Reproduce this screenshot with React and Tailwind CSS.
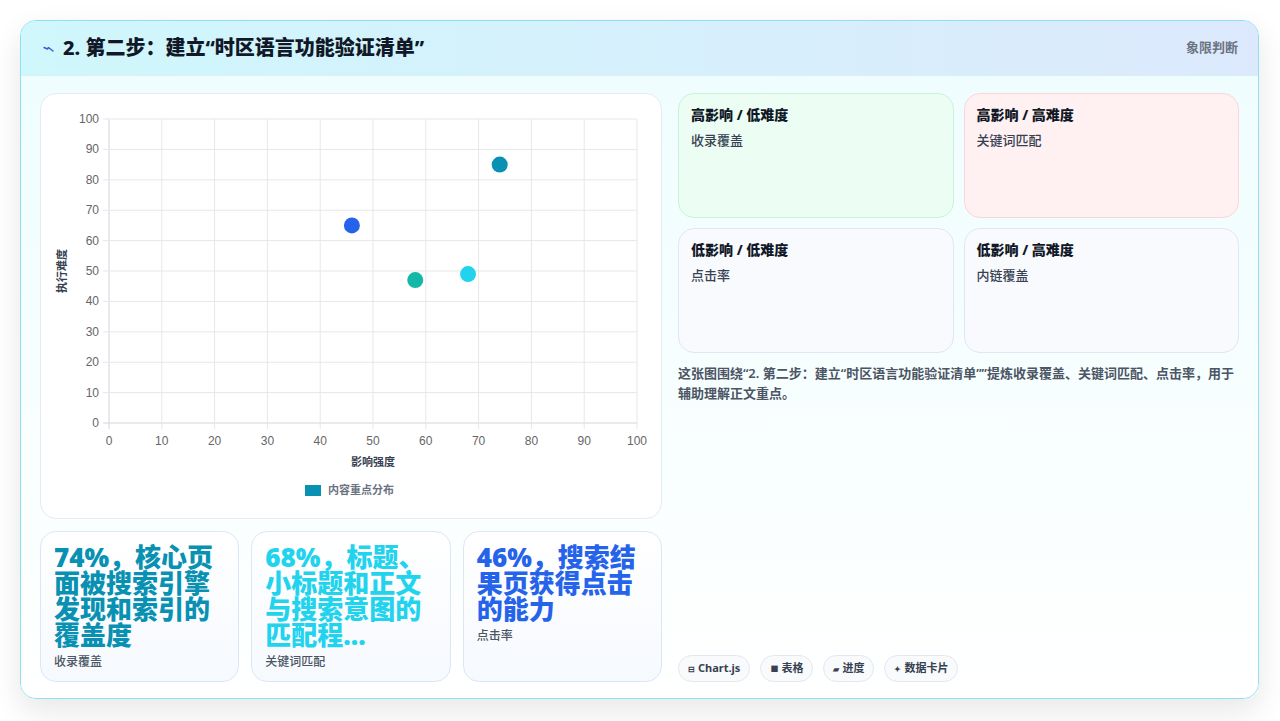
import React from 'react'

const FONT = { fontFamily: '"Noto Sans", "Noto Sans CJK SC", sans-serif' }

const POINTS = [
  { x: 46, y: 65, color: '#2563eb' },
  { x: 74, y: 85, color: '#0891b2' },
  { x: 58, y: 47, color: '#14b8a6' },
  { x: 68, y: 49, color: '#22d3ee' },
]

const QUADRANTS = [
  { title: '高影响 / 低难度', item: '收录覆盖', cls: 'bg-[#ecfdf3] border-[#c8f3d8]' },
  { title: '高影响 / 高难度', item: '关键词匹配', cls: 'bg-[#fff0f1] border-[#fbd5da]' },
  { title: '低影响 / 低难度', item: '点击率', cls: 'bg-[#f8fafd] border-[#dde8f6]' },
  { title: '低影响 / 高难度', item: '内链覆盖', cls: 'bg-[#f8fafd] border-[#dde8f6]' },
]

const STATS = [
  { text: '74%，核心页面被搜索引擎发现和索引的覆盖度', label: '收录覆盖', color: 'text-[#0891b2]' },
  { text: '68%，标题、小标题和正文与搜索意图的匹配程...', label: '关键词匹配', color: 'text-[#22d3ee]' },
  { text: '46%，搜索结果页获得点击的能力', label: '点击率', color: 'text-[#2563eb]' },
]

const CHIPS = [
  { icon: '⊟', label: 'Chart.js' },
  { icon: '■', label: '表格' },
  { icon: '▰', label: '进度' },
  { icon: '✦', label: '数据卡片' },
]

// plot box inside the chart card (card-relative px)
const L = 68, R = 596, T = 25, B = 329
const px = v => L + ((R - L) * v) / 100
const py = v => B - ((B - T) * v) / 100

function Scatter() {
  const ticks = [0, 10, 20, 30, 40, 50, 60, 70, 80, 90, 100]
  const tickFont = { fontFamily: '"Liberation Sans", Arial, sans-serif' }
  return (
    <svg width="620" height="423" viewBox="0 0 620 423" className="block">
      {ticks.map(t => (
        <g key={t}>
          <line x1={px(t)} x2={px(t)} y1={T} y2={B + 6} stroke={t === 0 ? '#d1d5db' : '#e5e7eb'} strokeWidth="1" />
          <line x1={L - 6} x2={R} y1={py(t)} y2={py(t)} stroke={t === 0 ? '#d1d5db' : '#e5e7eb'} strokeWidth="1" />
          <text x={L - 10} y={py(t) + 4} textAnchor="end" fontSize="12" fill="#666" style={tickFont}>{t}</text>
          <text x={px(t)} y={B + 22} textAnchor="middle" fontSize="12" fill="#666" style={tickFont}>{t}</text>
        </g>
      ))}
      {POINTS.map((p, i) => (
        <circle key={i} cx={px(p.x)} cy={py(p.y)} r="8" fill={p.color} />
      ))}
      <text x={332} y={372} textAnchor="middle" fontSize="11" fontWeight="700" fill="#374151" style={FONT}>影响强度</text>
      <text transform={`translate(25 ${(T + B) / 2}) rotate(-90)`} textAnchor="middle" fontSize="11" fontWeight="700" fill="#374151" style={FONT}>执行难度</text>
      <rect x="264" y="391" width="16" height="11" fill="#0891b2" />
      <text x="287" y="400" fontSize="11" fontWeight="700" fill="#6b7280" style={FONT}>内容重点分布</text>
    </svg>
  )
}

export default function App() {
  return (
    <div className="min-h-[721px] bg-white pt-5 px-5 pb-[22px]" style={FONT}>
      <div className="w-[1239px] h-[679px] rounded-2xl border border-[#8fe0ef] overflow-hidden shadow-[0_12px_30px_rgba(15,23,42,0.10)] flex flex-col">
        <div className="h-[55px] shrink-0 flex items-center justify-between pl-[22px] pr-5 bg-linear-to-r from-[#cff7fc] to-[#dce9fc] border-b border-[#d6f0f6]">
          <div className="flex items-center gap-[9px]">
            <svg width="11" height="8" viewBox="0 0 11 8" className="mt-[2px]">
              <path d="M1 2.5 L4.5 4 L5.5 2.5 L10 6" fill="none" stroke="#3b5bdb" strokeWidth="1.4" strokeLinecap="round" strokeLinejoin="round" />
            </svg>
            <h2 className="text-[20px] font-extrabold text-[#111827]">2. 第二步：建立“时区语言功能验证清单”</h2>
          </div>
          <span className="text-[13px] font-semibold text-[#6b7280]">象限判断</span>
        </div>

        <div className="flex-1 bg-linear-to-b from-[#effdfe] to-white px-[19px] pt-[17px] pb-[17px] grid grid-cols-[622px_1fr] gap-4">
          <div className="flex flex-col gap-3">
            <div className="h-[426px] rounded-2xl border border-[#e3ebf3] bg-white">
              <Scatter />
            </div>
            <div className="grid grid-cols-3 gap-3 h-[151px]">
              {STATS.map(s => (
                <div key={s.label} className="rounded-2xl border border-[#dbe7f6] bg-linear-to-b from-white to-[#f6f9fe] px-[13px] pt-[12px]">
                  <div className={`text-[26px] leading-[26px] font-black ${s.color}`}>{s.text}</div>
                  <div className="mt-[5px] text-[12px] font-medium text-[#4b5563]">{s.label}</div>
                </div>
              ))}
            </div>
          </div>

          <div className="flex flex-col">
            <div className="grid grid-cols-2 gap-[10px]">
              {QUADRANTS.map(q => (
                <div key={q.title} className={`h-[125px] rounded-2xl border px-[12px] pt-[11px] ${q.cls}`}>
                  <div className="text-[14px] font-extrabold text-[#111827] leading-[20px]">{q.title}</div>
                  <div className="mt-[5px] text-[13px] font-medium text-[#374151] leading-[20px]">{q.item}</div>
                </div>
              ))}
            </div>
            <p className="mt-[10px] text-[13px] leading-[20px] font-semibold text-[#4b5563]">
              这张图围绕“2. 第二步：建立“时区语言功能验证清单””提炼收录覆盖、关键词匹配、点击率，用于辅助理解正文重点。
            </p>
            <div className="mt-auto flex gap-[10px]">
              {CHIPS.map(c => (
                <span key={c.label} className="h-[27px] px-[9px] rounded-full border border-[#e2e8f0] bg-[#f8fafc] flex items-center gap-[3px] text-[11px] font-bold text-[#374151]">
                  <span className="text-[8px]">{c.icon}</span>
                  {c.label}
                </span>
              ))}
            </div>
          </div>
        </div>
      </div>
    </div>
  )
}
